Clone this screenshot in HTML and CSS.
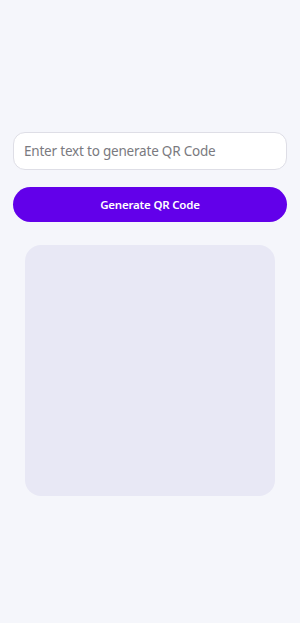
FILE: index.html
```html
<!DOCTYPE html>
<html lang="en">
<head>
  <meta charset="UTF-8" />
  <meta name="viewport" content="width=device-width, initial-scale=1.0"/>
  <title>QR Code Generator</title>
  <link rel="stylesheet" href="styles.css">
</head>
<body>
  <div class="screen">
    <input type="text" class="qr-input" placeholder="Enter text to generate QR Code" />
    <button type="button" class="generate-btn">Generate QR Code</button>
    <div class="qr-box"></div>
  </div>
</body>
</html>
```

FILE: styles.css
```css
body, html {
  margin: 0;
  padding: 0;
  background-color: #f5f6fb;
  font-family: "Noto Sans", sans-serif;
  height: 100%;
}

.screen {
  height: 100vh;
  box-sizing: border-box;
  padding: 5px 13px 0;
  display: flex;
  flex-direction: column;
  justify-content: center;
  align-items: center;
}

.qr-input {
  width: 100%;
  height: 38px;
  box-sizing: border-box;
  padding: 0 10px;
  border: 1px solid #dedee6;
  border-radius: 12px;
  background-color: #ffffff;
  font-family: inherit;
  font-size: 13.5px;
  letter-spacing: -0.2px;
  color: #333;
  outline: none;
}

.qr-input::placeholder {
  color: #7a7a80;
}

.generate-btn {
  width: 100%;
  height: 35px;
  margin-top: 17px;
  border: none;
  border-radius: 18px;
  background-color: #6200ea;
  color: #fff;
  font-family: inherit;
  font-weight: 600;
  font-size: 11.5px;
  letter-spacing: -0.2px;
  cursor: pointer;
}

.qr-box {
  width: 250px;
  height: 251px;
  margin-top: 23px;
  border-radius: 16px;
  background-color: #e8e8f5;
}
```
